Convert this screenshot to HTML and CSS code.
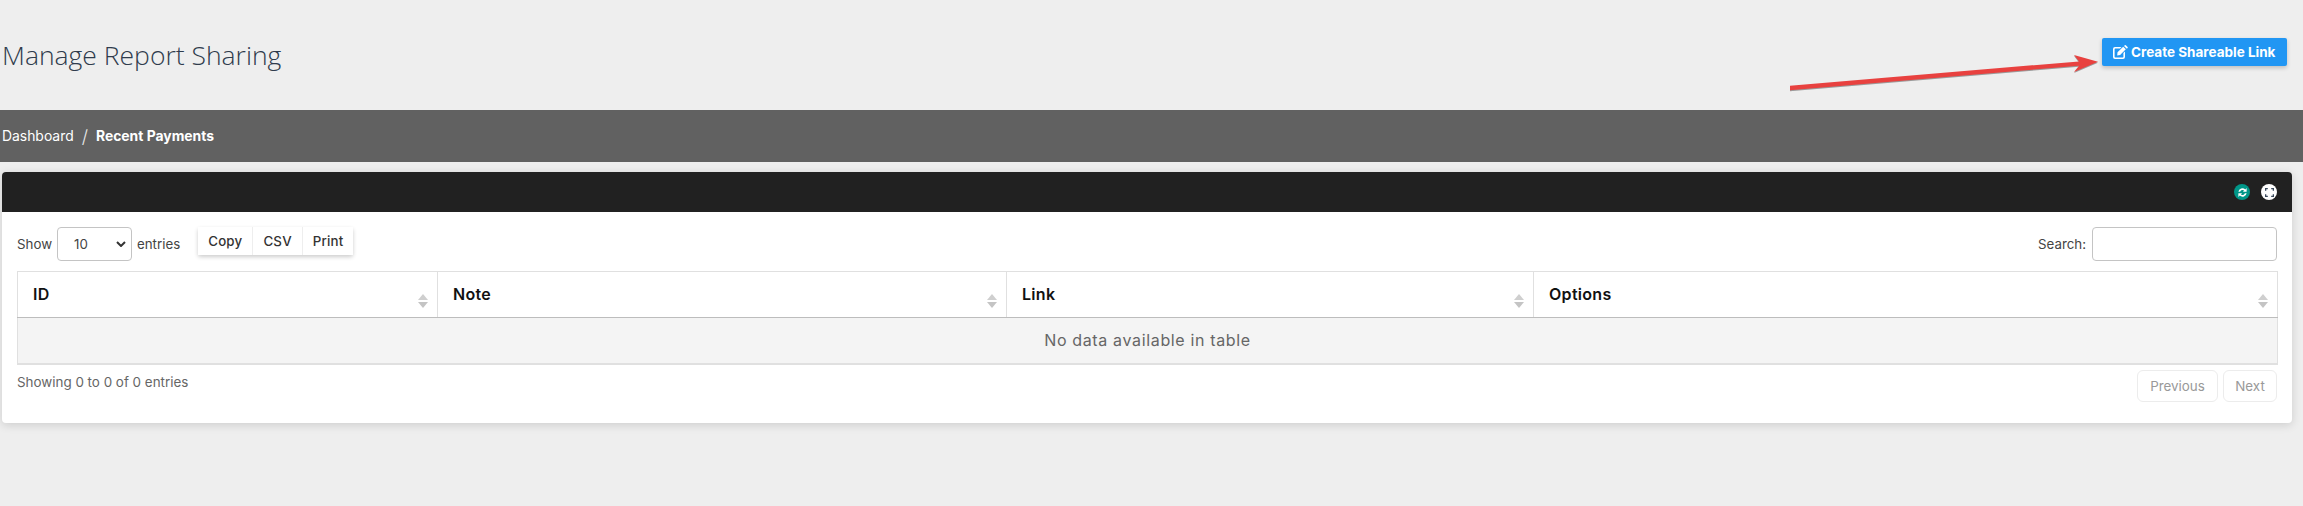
FILE: index.html
```html
<!DOCTYPE html>
<html lang="en">
<head>
<meta charset="utf-8">
<title>Manage Report Sharing</title>
<link rel="stylesheet" href="styles.css">
</head>
<body>
<header class="page-head">
  <h1 class="page-title">Manage Report Sharing</h1>
  <a class="btn-create" href="#">
    <svg class="btn-icon" viewBox="0 0 15 14" width="15" height="14"><path d="M2 2h6.500L7 3.600H2.300q-.7 0-.7.7v7.400q0 .7.7.7h7.400q.7 0 .7-.7V8l1.600-1.600V12q0 2-2 2H2q-2 0-2-2V4q0-2 2-2z" fill="#fff"/><path d="M4.500 7.300 10.200 1.700l2.600 2.600-5.700 5.700-2.900.4zM11 .9l.8-.6q.5-.4 1 0l1.800 1.800q.4.500 0 1l-.7.700z" fill="#fff"/></svg>
    <span>Create Shareable Link</span>
  </a>
  <svg class="arrow" viewBox="0 0 310 40" width="310" height="40"><path d="M1 31.700 L290 7.400 L285 1 L309 7.800 L285 18 L290 11.800 L1 36.200z" fill="#e8413f"/></svg>
</header>
<nav class="crumbs">
  <a href="#">Dashboard</a><span class="sep">/</span><strong>Recent Payments</strong>
</nav>
<section class="card">
  <div class="card-head">
    <span class="round teal"><svg viewBox="0 0 16 16" width="11" height="11"><path d="M2 7a6 6 0 0 1 10-3.500L14 1.500V7H8.500l2-2A4 4 0 0 0 4.500 7zM14 9a6 6 0 0 1-10 3.500L2 14.500V9h5.500l-2 2a4 4 0 0 0 6-2z" fill="#fff"/></svg></span>
    <span class="round white"><svg viewBox="0 0 16 16" width="9" height="9"><path d="M1 5V1h4M11 1h4v4M15 11v4h-4M5 15H1v-4" fill="none" stroke="#3a4a5c" stroke-width="2.600"/></svg></span>
  </div>
  <div class="card-body">
    <div class="toolbar">
      <div class="len">
        <label>Show</label>
        <span class="select">10<svg viewBox="0 0 10 6" width="10" height="6"><path d="M1 1l4 4 4-4" fill="none" stroke="#333" stroke-width="2"/></svg></span>
        <label>entries</label>
        <div class="export"><button>Copy</button><button>CSV</button><button>Print</button></div>
      </div>
      <div class="search"><label>Search:</label><span class="input"></span></div>
    </div>
    <table class="grid">
      <colgroup><col class="c1"><col class="c2"><col class="c3"><col class="c4"></colgroup>
      <thead>
        <tr>
          <th>ID<i class="sort"></i></th>
          <th>Note<i class="sort"></i></th>
          <th>Link<i class="sort"></i></th>
          <th>Options<i class="sort"></i></th>
        </tr>
      </thead>
      <tbody>
        <tr><td colspan="4">No data available in table</td></tr>
      </tbody>
    </table>
    <div class="foot">
      <div class="info">Showing 0 to 0 of 0 entries</div>
      <div class="pager"><span class="prev">Previous</span><span class="next">Next</span></div>
    </div>
  </div>
</section>
</body>
</html>
```
FILE: styles.css
```css
* { box-sizing: border-box; }
html, body { margin: 0; height: 100%; }
body {
  background: #eeeeee;
  font-family: "Inter", "Liberation Sans", sans-serif;
  color: #444;
  overflow: hidden;
}
.page-head {
  position: relative;
  height: 110px;
  padding: 38px 16px 0 2px;
  display: flex;
  justify-content: space-between;
  align-items: flex-start;
}
.page-title {
  margin: -1px 0 0;
  font-family: "Open Sans", sans-serif;
  font-weight: 300;
  font-size: 26.500px;
  line-height: 36px;
  color: #2f3b4c;
}
.btn-create {
  display: flex;
  align-items: center;
  gap: 3px;
  width: 185px;
  height: 28px;
  padding-left: 11px;
  background: #2196f3;
  border-radius: 2px;
  box-shadow: 0 2px 4px rgba(0,0,0,.2);
  color: #fff;
  font-size: 13.500px;
  font-weight: 700;
  text-decoration: none;
  white-space: nowrap;
}
.btn-icon { flex: none; }
.arrow {
  position: absolute;
  left: 1789px;
  top: 54px;
  filter: drop-shadow(0 1px 0 rgba(0,0,0,.35));
}
.crumbs {
  height: 52px;
  background: #616161;
  display: flex;
  align-items: center;
  padding-left: 2px;
  color: #fff;
  font-size: 13.900px;
}
.crumbs a { color: #fff; text-decoration: none; }
.crumbs .sep { margin: 0 8px; font-size: 18px; font-weight: 300; color: #e8e8e8; }
.crumbs strong { font-weight: 700; }
.card {
  width: 2290px;
  height: 251px;
  margin: 10px 0 0 2px;
  background: #fff;
  border-radius: 4px;
  box-shadow: 0 2px 10px rgba(0,0,0,.14);
}
.card-head {
  height: 40px;
  background: #212121;
  border-radius: 4px 4px 0 0;
  display: flex;
  justify-content: flex-end;
  align-items: center;
  gap: 11px;
  padding-right: 15px;
}
.round {
  width: 16px;
  height: 16px;
  border-radius: 50%;
  display: flex;
  align-items: center;
  justify-content: center;
}
.teal { background: #009688; }
.white { background: #fff; }
.card-body { padding: 15px 15px 0; }
.toolbar {
  display: flex;
  justify-content: space-between;
  align-items: flex-start;
  height: 44px;
  font-size: 13.300px;
}
.len, .search { display: flex; align-items: center; height: 34px; }
.len label { color: #444; }
.select {
  width: 75px;
  height: 34px;
  margin: 0 5px;
  padding: 0 5px 0 16px;
  background: #fff;
  border: 1px solid #c4c4c4;
  border-radius: 4px;
  display: flex;
  align-items: center;
  justify-content: space-between;
}
.export {
  display: flex;
  height: 28px;
  margin: -6px 0 0 18px;
  border-radius: 2px;
  box-shadow: 0 2px 4px rgba(0,0,0,.2);
}
.export button {
  border: 0;
  border-right: 1px solid #eee;
  background: #fff;
  padding: 0 10px;
  font: 500 13.300px "Inter", sans-serif;
  letter-spacing: .2px;
  color: #333;
}
.export button:last-child { border-right: 0; }
.search label { margin-right: 6px; }
.input {
  display: block;
  width: 185px;
  height: 34px;
  border: 1px solid #c4c4c4;
  border-radius: 4px;
}
.grid {
  width: 2260px;
  table-layout: fixed;
  border-collapse: collapse;
  border: 1px solid #e0e0e0;
  border-bottom-width: 2px;
}
.c1 { width: 420px; }
.c2 { width: 569px; }
.c3 { width: 527px; }
.c4 { width: 744px; }
.grid th {
  position: relative;
  height: 46px;
  padding: 0 15px 2px;
  text-align: left;
  font-size: 16px;
  font-weight: 600;
  letter-spacing: .3px;
  color: #111;
  border-right: 1px solid #e0e0e0;
  border-bottom: 1px solid #bdbdbd;
}
.grid th:last-child { border-right: 0; }
.sort {
  position: absolute;
  right: 9px;
  top: 22px;
  width: 10px;
  height: 14px;
}
.sort::before, .sort::after {
  content: "";
  position: absolute;
  left: 0;
  border-left: 5px solid transparent;
  border-right: 5px solid transparent;
}
.sort::before { top: 0; border-bottom: 6px solid #cfcfcf; }
.sort::after { bottom: 0; border-top: 6px solid #c4c4c4; }
.grid td {
  height: 46px;
  background: #f4f4f4;
  text-align: center;
  font-size: 16px;
  letter-spacing: .65px;
  color: #666;
}
.foot {
  display: flex;
  justify-content: space-between;
  align-items: flex-start;
  margin-top: 5px;
}
.info { font-size: 13.400px; color: #666; padding-top: 4px; }
.pager { display: flex; gap: 5px; }
.pager span {
  height: 32px;
  display: flex;
  align-items: center;
  justify-content: center;
  border: 1px solid #ececec;
  border-radius: 6px;
  font-size: 13.400px;
  color: #999;
}
.prev { width: 81px; }
.next { width: 54px; }
```
